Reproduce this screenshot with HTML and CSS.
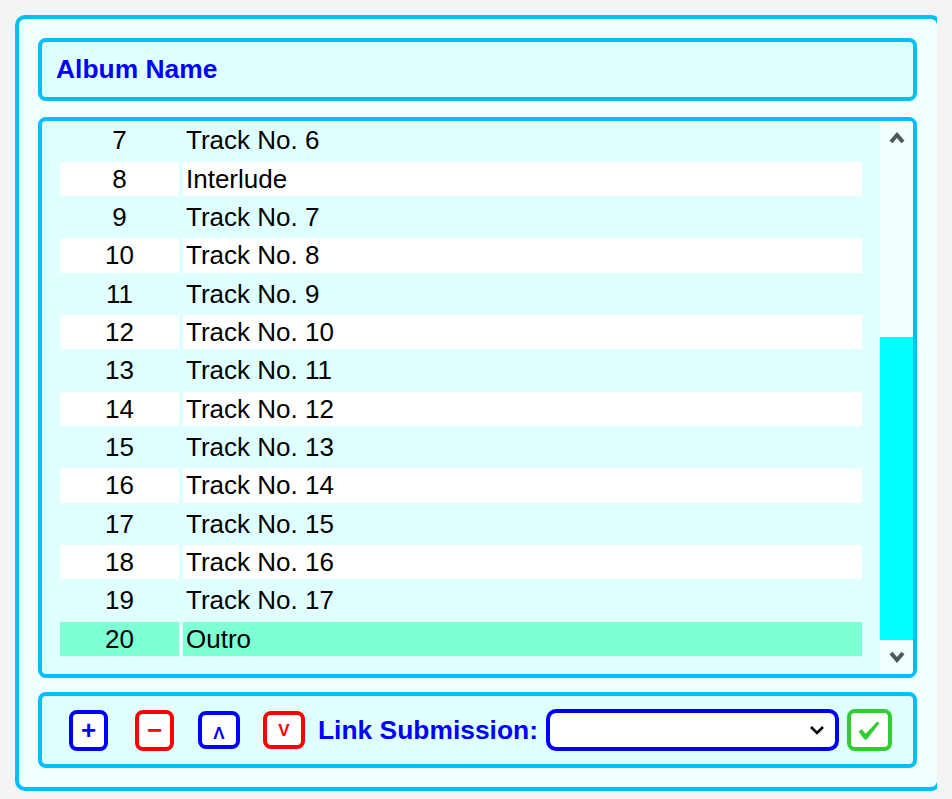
FILE: index.html
```html
<!DOCTYPE html>
<html>
<head>
  <title>Playlist Editor</title>
  <link rel="stylesheet" href="styles.css">
</head>
<body>
  <div class="playlist">
    <div class="album-title">Album Name</div>

    <div class="track-list">
      <div class="tracks">
        <div class="track"><span class="track-no">7</span><span class="track-name">Track No. 6</span></div>
        <div class="track"><span class="track-no">8</span><span class="track-name">Interlude</span></div>
        <div class="track"><span class="track-no">9</span><span class="track-name">Track No. 7</span></div>
        <div class="track"><span class="track-no">10</span><span class="track-name">Track No. 8</span></div>
        <div class="track"><span class="track-no">11</span><span class="track-name">Track No. 9</span></div>
        <div class="track"><span class="track-no">12</span><span class="track-name">Track No. 10</span></div>
        <div class="track"><span class="track-no">13</span><span class="track-name">Track No. 11</span></div>
        <div class="track"><span class="track-no">14</span><span class="track-name">Track No. 12</span></div>
        <div class="track"><span class="track-no">15</span><span class="track-name">Track No. 13</span></div>
        <div class="track"><span class="track-no">16</span><span class="track-name">Track No. 14</span></div>
        <div class="track"><span class="track-no">17</span><span class="track-name">Track No. 15</span></div>
        <div class="track"><span class="track-no">18</span><span class="track-name">Track No. 16</span></div>
        <div class="track"><span class="track-no">19</span><span class="track-name">Track No. 17</span></div>
        <div class="track selected"><span class="track-no">20</span><span class="track-name">Outro</span></div>
      </div>

      <!-- scrollbar, scrolled to the end of the list -->
      <div class="scrollbar">
        <div class="scroll-btn">
          <svg class="scroll-arrow" viewBox="0 0 16 14"><polyline points="2,11 8,4 14,11" /></svg>
        </div>
        <div class="scroll-track"><div class="scroll-thumb"></div></div>
        <div class="scroll-btn">
          <svg class="scroll-arrow" viewBox="0 0 16 14"><polyline points="2,3 8,10 14,3" /></svg>
        </div>
      </div>
    </div>

    <div class="toolbar">
      <button class="tool-btn blue add">+</button>
      <button class="tool-btn red remove">&minus;</button>
      <button class="tool-btn blue move up">&Lambda;</button>
      <button class="tool-btn red move down">V</button>
      <label class="link-label" for="linkSelect">Link Submission:</label>
      <div class="link-select">
        <select id="linkSelect"></select>
        <svg class="select-arrow" viewBox="0 0 16 11"><polyline points="2,2 8,8 14,2" /></svg>
      </div>
      <button class="submit-btn">
        <svg class="check-icon" viewBox="0 0 22 19">
          <path d="M0.5 10.5 L3.8 8.3 L7.6 12.8 L19.3 0.5 L21.5 2.2 L8.8 18.5 L6.4 18.5 Z" />
        </svg>
      </button>
    </div>
  </div>
</body>
</html>
```

FILE: styles.css
```css
:root {
  --border: #00bfff;
  --panel: #f0ffff;
  --box: #e0ffff;
  --blue: #0000ff;
  --red: #ff0000;
  --green: #32cd32;
}

* {
  box-sizing: border-box;
}

body {
  margin: 15px;
  background: #f4f4f4;
  font-family: "Liberation Sans", Arial, sans-serif;
}

.playlist {
  width: 926px;
  padding: 19px 20px 19px 19px;
  background: var(--panel);
  border: 4px solid var(--border);
  border-radius: 10px;
}

.album-title {
  height: 63px;
  padding: 0 14px;
  background: var(--box);
  border: 4px solid var(--border);
  border-radius: 8px;
  color: var(--blue);
  font-size: 26.4px;
  font-weight: bold;
  line-height: 55px;
}

/* Track list */
.track-list {
  display: flex;
  height: 561px;
  margin-top: 16px;
  background: var(--box);
  border: 4px solid var(--border);
  border-radius: 8px;
  overflow: hidden;
}

.tracks {
  flex: 1;
  display: flex;
  flex-direction: column;
  gap: 4px;
  padding: 2.4px 18px 0;
}

.track {
  display: grid;
  grid-template-columns: 119px 1fr;
  column-gap: 4px;
  height: 34.33px;
  font-size: 26px;
  line-height: 34.33px;
}

.track:nth-child(even) span {
  background: #ffffff;
}

.track.selected span {
  background: #7fffd4;
}

.track-no {
  text-align: center;
}

.track-name {
  padding-left: 3px;
}

.scrollbar {
  display: flex;
  flex-direction: column;
  width: 33px;
  background: var(--panel);
}

.scroll-btn {
  display: flex;
  align-items: center;
  justify-content: center;
  height: 34px;
}

.scroll-arrow {
  width: 16px;
  height: 14px;
  fill: none;
  stroke: #4f5757;
  stroke-width: 4;
}

.scroll-track {
  flex: 1;
  display: flex;
  flex-direction: column;
  justify-content: flex-end;
}

.scroll-thumb {
  height: 303px;
  background: #00ffff;
}

/* Toolbar */
.toolbar {
  display: flex;
  align-items: center;
  height: 76px;
  margin-top: 14px;
  padding-left: 27px;
  background: var(--box);
  border: 4px solid var(--border);
  border-radius: 8px;
}

.tool-btn {
  width: 39px;
  height: 41px;
  padding: 0;
  margin-right: 27px;
  background: #ffffff;
  border: 4px solid;
  border-radius: 8px;
  font-family: "Liberation Sans", Arial, sans-serif;
  font-size: 26px;
  font-weight: bold;
  line-height: 1;
}

.tool-btn.blue {
  color: var(--blue);
  border-color: var(--blue);
}

.tool-btn.red {
  color: var(--red);
  border-color: var(--red);
}

.tool-btn.remove {
  margin-right: 24px;
}

.tool-btn.move {
  width: 42px;
  height: 38px;
  margin-right: 23px;
  font-size: 17px;
}

.tool-btn.up {
  padding-top: 7px;
  font-size: 17px;
}

.tool-btn.down {
  margin-right: 13px;
}

.link-label {
  color: var(--blue);
  font-size: 26.4px;
  font-weight: bold;
  margin-right: 8px;
}

.link-select {
  display: flex;
  align-items: center;
  width: 293px;
  height: 42px;
  padding-right: 10px;
  background: #ffffff;
  border: 4px solid var(--blue);
  border-radius: 10px;
}

.link-select select {
  flex: 1;
  height: 100%;
  border: none;
  background: transparent;
  appearance: none;
  outline: none;
}

.select-arrow {
  width: 16px;
  height: 11px;
  fill: none;
  stroke: #000000;
  stroke-width: 2.6;
}

.submit-btn {
  display: flex;
  align-items: center;
  justify-content: center;
  width: 45px;
  height: 42px;
  padding: 0;
  margin-left: 8px;
  background: #ffffff;
  border: 4px solid var(--green);
  border-radius: 8px;
}

.check-icon {
  width: 22px;
  height: 19px;
  fill: var(--green);
}
```
